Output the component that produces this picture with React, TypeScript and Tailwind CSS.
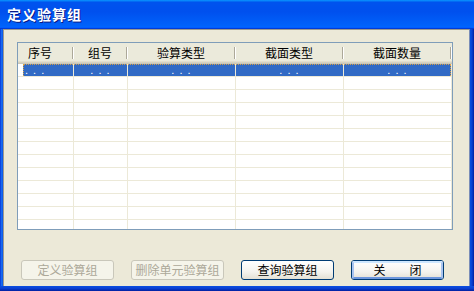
import React from "react";

const cols = [
  { w: "w-[56px]", label: "序号", left: true },
  { w: "w-[54px]", label: "组号" },
  { w: "w-[108px]", label: "验算类型" },
  { w: "w-[108px]", label: "截面类型" },
  { w: "w-[108px]", label: "截面数量" },
];

function HeaderCell({ w, label, left }: { w: string; label: string; left?: boolean }) {
  return (
    <div className={`${w} flex h-full`}>
      <div
        className={`flex-1 flex items-center ${left ? "justify-start pl-[10px]" : "justify-center"} text-[12px] leading-none text-black pt-[2px]`}
      >
        {label}
      </div>
      <div className="w-[2px] mt-[4px] mb-[2px] border-l border-r border-l-[#aca899] border-r-white" />
    </div>
  );
}

function Button({
  label,
  disabled,
  isDefault,
  children,
}: {
  label?: string;
  disabled?: boolean;
  isDefault?: boolean;
  children?: React.ReactNode;
}) {
  if (disabled) {
    return (
      <div className="w-[93px] h-[20px] rounded-[3px] border border-[#c9c7ba] bg-[#f5f4ea] flex items-center justify-center text-[12px] text-[#aca899] leading-none">
        {label}
      </div>
    );
  }
  return (
    <div className="w-[93px] h-[20px] rounded-[3px] border border-[#003c74] bg-[linear-gradient(to_bottom,#ffffff,#f4f3ee_60%,#e3e0d5)] flex">
      <div
        className={`flex-1 rounded-[2px] flex items-center justify-center text-[12px] text-black leading-none ${
          isDefault ? "border-2 border-[#a9c4ef] border-t-[#cee7ff] border-b-[#6c96dd]" : ""
        }`}
      >
        {children ?? label}
      </div>
    </div>
  );
}

export default function App() {
  const rows = Array.from({ length: 13 });
  return (
    <div className="w-[474px] h-[291px] flex flex-col overflow-hidden font-['Noto_Sans_CJK_SC','Noto_Sans_CJK_JP',sans-serif] bg-[#0a45d8]">
      {/* Title bar */}
      <div className="h-[29px] shrink-0 flex items-center pl-[7px] bg-[linear-gradient(180deg,#0997ff,#0053ee_8%,#0050ee_40%,#0062fa_88%,#0066ff_93%,#005bff_95%,#003dd7_96%,#003dd7)]">
        <span className="text-white font-bold text-[14px] leading-none tracking-[1px] [text-shadow:1px_1px_#0a1883] pb-[1px]">
          定义验算组
        </span>
      </div>
      {/* Frame + body */}
      <div className="flex flex-1 min-h-0">
        <div className="w-[3px] bg-[linear-gradient(to_right,#0831d9,#166aee,#0c55e8)]" />
        <div className="flex-1 bg-[#ece9d8] border-l border-t border-[#9d9a8c] flex flex-col pl-[13px] pt-[12px]">
          {/* List view */}
          <div className="w-[436px] h-[188px] border border-[#7f9db9] bg-white overflow-hidden flex flex-col">
            <div className="shrink-0 flex flex-col">
              <div className="h-[18px] bg-[#ebeadb] flex">
                {cols.map((c) => (
                  <HeaderCell key={c.label} w={c.w} label={c.label} left={c.left} />
                ))}
              </div>
              <div className="h-px bg-[#e2decd]" />
              <div className="h-px bg-[#d6d2c2]" />
              <div className="h-px bg-[#cbc7b8]" />
            </div>
            {rows.map((_, i) => {
              const sel = i === 0;
              return (
                <div key={i} className="relative h-[13px] shrink-0 flex border-b border-[#ece9d8]">
                  {cols.map((c, j) => (
                    <div key={j} className={`${c.w} h-full flex border-r border-[#ece9d8]`}>
                      {sel ? (
                        j === 0 ? (
                          <>
                            <div className="w-[5px] bg-white" />
                            <div className="flex-1 bg-[#316ac5] text-white text-[11px] leading-[12px] pl-[2px] font-['Liberation_Sans',sans-serif] tracking-[1px]">
                              . . .
                            </div>
                          </>
                        ) : (
                          <div className="flex-1 bg-[#316ac5] text-white text-[11px] leading-[12px] text-center font-['Liberation_Sans',sans-serif] tracking-[1px]">
                            . . .
                          </div>
                        )
                      ) : null}
                    </div>
                  ))}
                  {sel && (
                    <div className="absolute left-[5px] top-0 w-[428px] h-[12px] border border-b-0 border-dotted border-[#d7a046]" />
                  )}
                </div>
              );
            })}
          </div>
          {/* Buttons */}
          <div className="mt-[30px] pl-[4px] flex gap-[17px]">
            <Button label="定义验算组" disabled />
            <Button label="删除单元验算组" disabled />
            <Button label="查询验算组" />
            <Button isDefault>
              <span className="flex gap-[24px]">
                <span>关</span>
                <span>闭</span>
              </span>
            </Button>
          </div>
        </div>
        <div className="w-[5px] bg-[linear-gradient(to_right,#0a4ee0,#0b3fd0,#001ea0)] border-l border-[#7a8db8]" />
      </div>
      <div className="h-[5px] shrink-0 bg-[linear-gradient(to_bottom,#0b4fe2,#0b3fd0,#001ea0)]" />
    </div>
  );
}
